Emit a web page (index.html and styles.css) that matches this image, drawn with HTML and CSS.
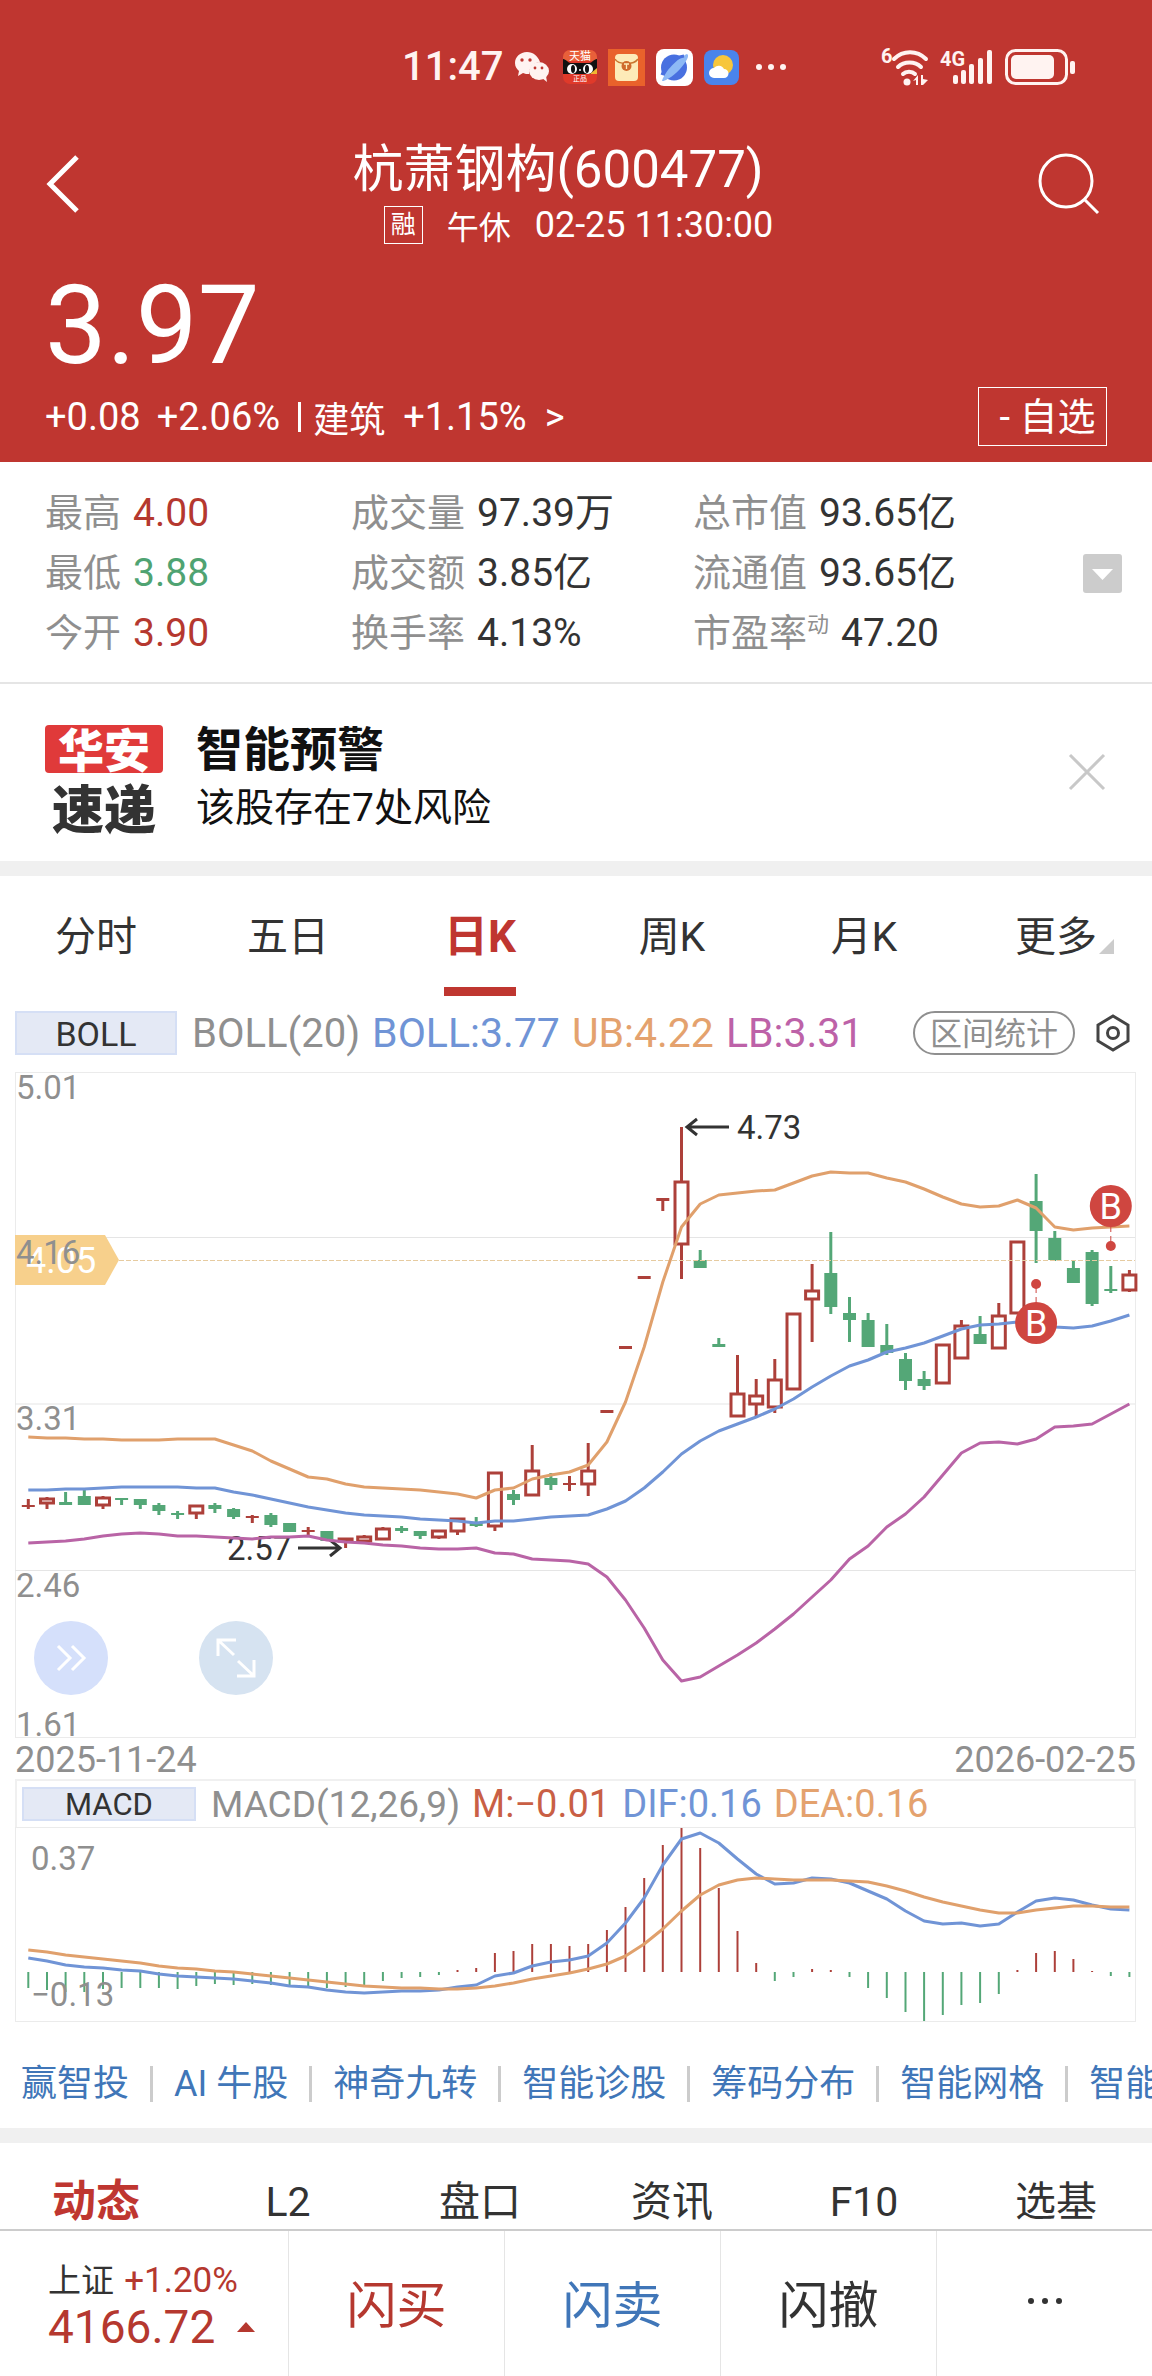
FILE: index.html
```
<!DOCTYPE html>
<html lang="zh-CN">
<head>
    <meta charset="UTF-8">
    <meta name="viewport" content="width=device-width, initial-scale=1.0">
    <title>杭萧钢构(600477)</title>
    <link rel="stylesheet" href="styles.css">
</head>
<body>
    <header class="header">
        <!-- 状态栏 -->
        <div class="status-bar">
            <div class="status-left">
                <span class="time">11:47</span>
                <svg class="wechat" viewBox="0 0 36 32" width="36" height="32">
                    <path fill="#fff3f1" d="M13 1C6 1 1 6 1 12c0 4 2 6 4 8l-1 5 5-3c2 1 4 1 6 1 0-7 4-11 11-12C24 5 19 1 13 1z"/>
                    <ellipse cx="25" cy="20" rx="10" ry="9" fill="#fff3f1"/>
                    <path fill="#fff3f1" d="M28 27l5 4-1-6z"/>
                    <g fill="#bf3630"><circle cx="8" cy="9" r="1.7"/><circle cx="16" cy="9" r="1.7"/><circle cx="21" cy="17" r="1.4"/><circle cx="28" cy="17" r="1.4"/></g>
                </svg>
                <svg viewBox="0 0 34 34" width="34" height="34">
                    <rect width="34" height="34" rx="7" fill="#e03a2a"/>
                    <path d="M0 7a7 7 0 0 1 7-7h20a7 7 0 0 1 7 7v4H0z" fill="#e8603a"/>
                    <path d="M0 9c3 0 5 4 8 4h18c3 0 5-4 8-4v15H0z" fill="#111"/>
                    <ellipse cx="9" cy="19" rx="5" ry="5" fill="#fff"/><ellipse cx="25" cy="19" rx="5" ry="5" fill="#fff"/>
                    <ellipse cx="10" cy="19" rx="2" ry="4" fill="#111"/><ellipse cx="24" cy="19" rx="2" ry="4" fill="#111"/>
                    <circle cx="17" cy="20" r="1" fill="#fff"/>
                    <path d="M27 24l7-6v6z" fill="#f2b632"/>
                    <text x="17" y="10" class="tmall-text">天猫</text>
                    <text x="17" y="31" class="tmall-sub">正品</text>
                </svg>
                <svg viewBox="0 0 37 37" width="37" height="37">
                    <rect width="37" height="37" fill="#e9622b"/>
                    <rect x="7" y="5" width="23" height="27" rx="4" fill="#fdebb8"/>
                    <path d="M7 10c3 6 19 6 23 0" fill="none" stroke="#c9762f" stroke-width="1.5"/>
                    <circle cx="18.500" cy="17" r="5" fill="#cf6a2c"/>
                    <path d="M16 15h5M18.500 15v5" stroke="#fdebb8" stroke-width="1.3"/>
                </svg>
                <svg viewBox="0 0 37 37" width="37" height="37">
                    <rect width="37" height="37" rx="8" fill="#fff"/>
                    <circle cx="18" cy="18.500" r="13" fill="#4870e0"/>
                    <path d="M6 32C9 22 22 9 31 5c2 1 1 4-1 7-5 8-12 15-20 19-2 1-3 1-4 1z" fill="#8db9f5"/>
                    <path d="M6 26C9 17 19 8 28 7" fill="none" stroke="#4870e0" stroke-width="3"/>
                </svg>
                <svg viewBox="0 0 35 35" width="35" height="35">
                    <rect width="35" height="35" rx="8" fill="#4a84ec"/>
                    <circle cx="19" cy="15" r="10" fill="#f7c63c"/>
                    <path d="M10 28a5 5 0 0 1 0-10 6 6 0 0 1 10 1 4.500 4.500 0 0 1 0 9z" fill="#fff"/>
                </svg>
                <svg class="more-dots" viewBox="0 0 30 6" width="30" height="6" fill="#fff3f1">
                    <circle cx="3" cy="3" r="3"/><circle cx="15" cy="3" r="3"/><circle cx="27" cy="3" r="3"/>
                </svg>
            </div>
            <div class="status-right">
                <svg viewBox="0 0 48 38" width="48" height="38">
                    <text x="0" y="15" class="signal-text">6</text>
                    <g fill="none" stroke="#fff3f1" stroke-width="4" stroke-linecap="round">
                        <path d="M13 11c9-9 23-9 32 0"/><path d="M17 19c6-6 17-6 23 0"/><path d="M22 26c3-3 9-3 12 0"/>
                    </g>
                    <circle cx="26" cy="34" r="3.500" fill="#fff3f1"/>
                    <path d="M32 33l5-6v10h-2v-5zM40 37V27h2v4l5 1-5 5z" fill="#fff3f1"/>
                </svg>
                <svg viewBox="0 0 54 36" width="54" height="36">
                    <text x="0" y="17" class="signal-text">4G</text>
                    <g fill="#fff3f1">
                        <rect x="13" y="26" width="5" height="9" rx="2"/><rect x="21" y="21" width="5" height="14" rx="2"/>
                        <rect x="29" y="15" width="5" height="20" rx="2"/><rect x="38" y="9" width="5" height="26" rx="2"/>
                        <rect x="47" y="1" width="5" height="34" rx="2"/>
                    </g>
                </svg>
                <svg class="battery" viewBox="0 0 72 36" width="72" height="36">
                    <rect x="1.500" y="1.500" width="60" height="33" rx="9" fill="none" stroke="#fff3f1" stroke-width="3"/>
                    <rect x="6" y="6" width="43" height="24" rx="5" fill="#fff3f1"/>
                    <rect x="65" y="12" width="5" height="13" rx="2" fill="#fff3f1"/>
                </svg>
            </div>
        </div>

        <!-- 标题 -->
        <div class="nav">
            <button class="back" aria-label="返回">
                <svg viewBox="0 0 34 58" width="34" height="58"><path d="M32 2L5 29l27 27" fill="none" stroke="#fff" stroke-width="5"/></svg>
            </button>
            <div class="title">
                <h1>杭萧钢构(600477)</h1>
                <div class="subtitle"><span class="tag">融</span><span class="session">午休</span><span>02-25 11:30:00</span></div>
            </div>
            <button class="search" aria-label="搜索">
                <svg viewBox="0 0 62 62" width="62" height="62" fill="none" stroke="#fff" stroke-width="3"><circle cx="28" cy="28" r="26"/><path d="M46 46l14 14"/></svg>
            </button>
        </div>

        <div class="price">3.97</div>
        <div class="change">
            <span>+0.08</span><span>+2.06%</span>
            <i class="bar"></i>
            <a href="#" class="sector"><b>建筑</b><span>+1.15%</span><span>&gt;</span></a>
            <button class="watch">- 自选</button>
        </div>
    </header>

    <!-- 行情数据 -->
    <section class="quote">
        <dl class="col">
            <div><dt>最高</dt><dd class="red">4.00</dd></div>
            <div><dt>最低</dt><dd class="green">3.88</dd></div>
            <div><dt>今开</dt><dd class="red">3.90</dd></div>
        </dl>
        <dl class="col">
            <div><dt>成交量</dt><dd>97.39万</dd></div>
            <div><dt>成交额</dt><dd>3.85亿</dd></div>
            <div><dt>换手率</dt><dd>4.13%</dd></div>
        </dl>
        <dl class="col">
            <div><dt>总市值</dt><dd>93.65亿</dd></div>
            <div><dt>流通值</dt><dd>93.65亿</dd></div>
            <div><dt>市盈率<sup>动</sup></dt><dd>47.20</dd></div>
        </dl>
        <button class="expand" aria-label="展开">
            <svg viewBox="0 0 39 39" width="39" height="39"><rect width="39" height="39" rx="3" fill="#ccc"/><path d="M9 15h21L19.500 26z" fill="#fff"/></svg>
        </button>
    </section>

    <!-- 预警 -->
    <section class="alert">
        <div class="logo"><span class="logo-top">华安</span><span class="logo-bottom">速递</span></div>
        <div class="alert-text">
            <h2>智能预警</h2>
            <p>该股存在7处风险</p>
        </div>
        <button class="close" aria-label="关闭">
            <svg viewBox="0 0 36 36" width="36" height="36"><path d="M1 1l34 34M35 1L1 35" stroke="#c8c8c8" stroke-width="3"/></svg>
        </button>
    </section>

    <nav class="tabs period-tabs">
        <button>分时</button>
        <button>五日</button>
        <button class="active">日K</button>
        <button>周K</button>
        <button>月K</button>
        <button class="more">更多<i class="corner"></i></button>
    </nav>

    <!-- K线图 -->
    <section class="chart-box">
        <div class="indicator">
            <button class="name">BOLL</button>
            <span class="params">BOLL(20)</span>
            <span class="c-blue">BOLL:3.77</span>
            <span class="c-orange">UB:4.22</span>
            <span class="c-purple">LB:3.31</span>
            <button class="range">区间统计</button>
            <button class="setting" aria-label="设置">
                <svg viewBox="0 0 34 38" width="34" height="38" fill="none" stroke="#444" stroke-width="3"><path d="M17 2l15 9v16l-15 9-15-9V11z"/><circle cx="17" cy="19" r="5.500"/></svg>
            </button>
        </div>
        <div class="kline">
            <svg id="kline" viewBox="0 0 1121 666"></svg>
            <div class="tools">
                <button class="fast" aria-label="快进">
                    <svg viewBox="0 0 30 26" width="30" height="26" fill="none" stroke="#fff" stroke-width="3"><path d="M2 1l12 12L2 25M16 1l12 12-12 12"/></svg>
                </button>
                <button class="full" aria-label="全屏">
                    <svg viewBox="0 0 40 40" width="40" height="40" fill="none" stroke="#fff" stroke-width="3"><path d="M2 18V2h18M2 2l16 15M38 22v16H21M38 38L22 23"/></svg>
                </button>
            </div>
        </div>
        <div class="dates"><span>2025-11-24</span><span>2026-02-25</span></div>
        <div class="indicator macd-head">
            <button class="name">MACD</button>
            <span class="params">MACD(12,26,9)</span>
            <span class="c-red">M:−0.01</span>
            <span class="c-blue">DIF:0.16</span>
            <span class="c-orange">DEA:0.16</span>
        </div>
        <svg id="macd" viewBox="0 0 1121 195"></svg>
    </section>

    <!-- 工具链接 -->
    <div class="links">
        <a href="#">赢智投</a>
        <a href="#">AI 牛股</a>
        <a href="#">神奇九转</a>
        <a href="#">智能诊股</a>
        <a href="#">筹码分布</a>
        <a href="#">智能网格</a>
        <a href="#">智能</a>
    </div>

    <nav class="tabs info-tabs">
        <button class="active">动态</button>
        <button>L2</button>
        <button>盘口</button>
        <button>资讯</button>
        <button>F10</button>
        <button>选基</button>
    </nav>

    <!-- 底部交易栏 -->
    <footer class="bottom">
        <a href="#" class="index">
            <span class="index-name">上证 <em>+1.20%</em></span>
            <span class="index-value">4166.72<svg viewBox="0 0 18 10" width="18" height="10"><path d="M0 10L9 0l9 10z" fill="#b5382f"/></svg></span>
        </a>
        <button class="buy">闪买</button>
        <button class="sell">闪卖</button>
        <button>闪撤</button>
        <button aria-label="更多">
            <svg viewBox="0 0 34 6" width="34" height="6" fill="#333"><circle cx="3" cy="3" r="3"/><circle cx="17" cy="3" r="3"/><circle cx="31" cy="3" r="3"/></svg>
        </button>
    </footer>
    <script src="chart.js"></script>
</body>
</html>
```

FILE: styles.css
```
* {
    box-sizing: border-box;
}
body {
    margin: 0;
    background-color: #fff;
    color: #333;
    font-family: Roboto, "Noto Sans CJK SC", sans-serif;
    overflow-x: hidden;
}
h1, h2, p, dl, dd {
    margin: 0;
    font-weight: 400;
}
button {
    padding: 0;
    border: none;
    background: none;
    color: inherit;
    font: inherit;
    cursor: pointer;
}
a {
    color: inherit;
    text-decoration: none;
}
svg {
    display: block;
    flex-shrink: 0;
    overflow: visible;
}

/* 顶部 */
.header {
    padding: 47px 45px 16px;
    background-color: #bf3630;
    color: #fff;
}
.status-bar {
    display: flex;
    justify-content: space-between;
    align-items: center;
    height: 40px;
    padding-left: 357px;
    padding-right: 30px;
    color: #fff3f1;
}
.status-left, .status-right {
    display: flex;
    align-items: center;
    gap: 11px;
}
.time {
    font-size: 40px;
    font-weight: 500;
    line-height: 40px;
}
.wechat {
    margin-right: 2px;
}
.more-dots {
    margin-left: 6px;
}
.tmall-text {
    font-size: 11px;
    fill: #fff;
    text-anchor: middle;
}
.tmall-sub {
    font-size: 7px;
    fill: #fff;
    text-anchor: middle;
}
.signal-text {
    font-size: 20px;
    font-weight: 700;
    fill: #fff3f1;
}
.nav {
    display: flex;
    align-items: flex-start;
    margin-top: 53px;
}
.back, .search {
    display: flex;
    align-items: center;
    height: 88px;
}
.back {
    width: 67px;
}
.search {
    justify-content: flex-end;
    width: 103px;
    padding-right: 7px;
}
.title {
    flex: 1;
    text-align: center;
}
h1 {
    font-size: 51px;
    line-height: 60px;
}
.subtitle {
    display: flex;
    justify-content: center;
    align-items: center;
    gap: 24px;
    height: 40px;
    margin-top: 5px;
    padding-left: 41px;
    font-size: 36px;
}
.session {
    font-size: 32px;
}
.tag {
    width: 39px;
    border: 1px solid #fff;
    font-size: 25px;
    line-height: 36px;
}
.price {
    margin-top: 26px;
    font-size: 110px;
    line-height: 110px;
}
.change {
    display: flex;
    align-items: center;
    gap: 16px;
    margin-top: 6px;
    font-size: 38px;
}
.bar {
    width: 3px;
    height: 30px;
    margin: 0 -4px 0 2px;
    background-color: #fff;
}
.sector {
    display: flex;
    align-items: center;
    gap: 18px;
}
.sector b {
    font-size: 36px;
    font-weight: 400;
}
.watch {
    margin-left: auto;
    width: 129px;
    height: 59px;
    padding-left: 10px;
    border: 1px solid #fff;
    font-size: 38px;
    line-height: 59px;
}

/* 行情数据 */
.quote {
    display: grid;
    grid-template-columns: 306px 342px 1fr 39px;
    align-items: center;
    padding: 21px 30px 19px 45px;
    border-bottom: 2px solid #e5e5e5;
    font-size: 38px;
    line-height: 60px;
}
.col div {
    display: flex;
    gap: 12px;
    height: 60px;
}
.col dt {
    color: #8f8f8f;
}
.col dd {
    font-size: 39px;
    white-space: nowrap;
}
.col sup {
    font-size: 22px;
    line-height: 0;
}
.red {
    color: #b5382f;
}
.green {
    color: #4fa372;
}

/* 预警 */
.alert {
    display: flex;
    align-items: center;
    gap: 33px;
    padding: 37px 47px 24px 45px;
    border-bottom: 15px solid #f0f0f0;
    color: #111;
}
.logo {
    display: flex;
    flex-direction: column;
    gap: 8px;
    width: 118px;
    font-family: "Noto Sans CJK SC", sans-serif;
    font-size: 52px;
    font-weight: 900;
    line-height: 52px;
    text-align: center;
}
.logo-top {
    height: 48px;
    border-radius: 4px;
    background-color: #e03a3a;
    color: #fff;
    font-size: 46px;
    line-height: 44px;
}
.logo-bottom {
    color: #333;
}
.alert-text {
    flex: 1;
    line-height: 58px;
}
.alert-text h2 {
    font-size: 47px;
    font-weight: 700;
}
.alert-text p {
    font-size: 39px;
}
.close {
    margin-bottom: 14px;
}

/* 标签栏 */
.tabs {
    display: grid;
    grid-template-columns: repeat(6, 1fr);
    font-size: 41px;
}
.tabs .active {
    color: #bf3630;
    font-size: 44px;
    font-weight: 700;
}
.period-tabs button {
    display: flex;
    flex-direction: column;
    align-items: center;
    height: 120px;
    padding-top: 31px;
    line-height: 60px;
}
.period-tabs .active::after {
    content: "";
    width: 72px;
    height: 9px;
    margin-top: 20px;
    background-color: #bf3630;
}
.more {
    position: relative;
}
.corner {
    position: absolute;
    left: 50%;
    top: 63px;
    margin-left: 43px;
    border-left: 15px solid transparent;
    border-bottom: 15px solid #ccc;
}

/* 图表 */
.chart-box {
    padding: 15px 16px 0 15px;
}
.indicator {
    display: flex;
    align-items: center;
    gap: 12px;
    height: 44px;
    color: #8f8f8f;
    font-size: 41px;
    white-space: nowrap;
}
.indicator .name {
    width: 162px;
    height: 44px;
    margin-right: 3px;
    border: 2px solid #d5dff5;
    background-color: #e4e9f5;
    color: #333;
    font-size: 34px;
    line-height: 42px;
}
.indicator .params {
    font-size: 40px;
}
.indicator .c-blue {
    color: #7094d6;
}
.indicator .c-orange {
    color: #e4a26e;
}
.indicator .c-purple {
    color: #bd62a8;
}
.indicator .c-red {
    color: #c95f45;
}
.indicator .range {
    width: 162px;
    height: 44px;
    margin-left: auto;
    border: 2px solid #8f8f8f;
    border-radius: 22px;
    font-size: 32px;
    line-height: 42px;
}
.setting {
    margin: 0 6px 0 9px;
}
.kline {
    position: relative;
    margin-top: 17px;
}
#kline, #macd {
    width: 100%;
}
.tools {
    position: absolute;
    left: 19px;
    bottom: 43px;
    display: flex;
    gap: 91px;
}
.tools button {
    display: flex;
    justify-content: center;
    align-items: center;
    width: 74px;
    height: 74px;
    border-radius: 50%;
}
.tools .fast {
    background-color: #d5e0fb;
}
.tools .full {
    background-color: #d6e3f1;
}
.dates {
    display: flex;
    justify-content: space-between;
    padding-top: 3px;
    color: #8f8f8f;
    font-size: 36px;
    line-height: 38px;
}
.macd-head {
    height: 48px;
    padding-left: 5px;
    border: 2px solid #f0f0f0;
    border-bottom: none;
    font-size: 38px;
}
.macd-head .name {
    width: 174px;
    height: 34px;
    font-size: 31px;
    line-height: 32px;
}
.macd-head .params {
    font-size: 37px;
}
.axis {
    fill: #8f8f8f;
    font-size: 33px;
}
.mark {
    fill: #333;
    font-size: 33px;
}
.cost {
    fill: #fff;
    font-size: 36px;
}
.badge {
    fill: #fff;
    font-size: 36px;
    text-anchor: middle;
}

/* 工具链接 */
.links {
    display: flex;
    padding: 38px 0 20px 21px;
    border-bottom: 15px solid #f0f0f0;
    overflow: hidden;
    color: #4076b8;
    font-size: 36px;
    line-height: 48px;
    white-space: nowrap;
}
.links a {
    display: flex;
    align-items: center;
    flex-shrink: 0;
}
.links a + a::before {
    content: "";
    width: 3px;
    height: 36px;
    margin: 0 21px;
    background-color: #ccc;
}

.info-tabs {
    padding-top: 33px;
    border-bottom: 2px solid #ccc;
    line-height: 53px;
}

/* 底部交易栏 */
.bottom {
    display: grid;
    grid-template-columns: 4fr 3fr 3fr 3fr 3fr;
    height: 145px;
}
.bottom button {
    display: flex;
    justify-content: center;
    align-items: center;
    padding-bottom: 5px;
    border-left: 1px solid #e5e5e5;
    font-size: 50px;
}
.index {
    display: flex;
    flex-direction: column;
    justify-content: center;
    padding: 2px 0 0 48px;
}
.index-name {
    font-size: 33px;
    line-height: 44px;
}
.index-name em {
    margin-left: 2px;
    color: #b5382f;
    font-size: 35px;
    font-style: normal;
}
.index-value {
    display: flex;
    align-items: center;
    gap: 22px;
    color: #b5382f;
    font-size: 46px;
    line-height: 48px;
}
.bottom .buy {
    color: #b5382f;
}
.bottom .sell {
    color: #4076b8;
}
```

FILE: chart.js
```
const RED = '#ad403a';
const GREEN = '#54a777';
const BLUE = '#7094d6';
const ORANGE = '#e0a06c';
const PURPLE = '#b964a6';
const STEP = 18.663;

// [涨跌, 最高, 实体上沿, 实体下沿, 最低]
const candles = [
    [1, 427, 433, 435, 437], [1, 425, 426, 432, 437], [0, 420, 430, 433, 433], [0, 418, 424, 433, 433],
    [1, 424, 425, 434, 437], [0, 426, 426, 428, 433], [0, 427, 427, 433, 437], [0, 431, 433, 439, 443],
    [0, 439, 441, 443, 447], [1, 433, 433, 442, 447], [0, 431, 433, 437, 441], [0, 436, 437, 445, 447],
    [1, 443, 444, 446, 451], [0, 441, 443, 453, 455], [0, 451, 451, 460, 460], [1, 455, 458, 460, 463],
    [0, 459, 459, 469, 469], [1, 466, 466, 470, 476], [1, 463, 464, 470, 471], [1, 455, 456, 468, 468],
    [0, 454, 456, 459, 461], [0, 459, 459, 464, 467], [1, 458, 458, 466, 467], [1, 446, 446, 460, 463],
    [0, 445, 451, 454, 455], [1, 400, 400, 455, 459], [0, 418, 422, 428, 433], [1, 373, 398, 424, 424],
    [0, 401, 406, 413, 418], [1, 404, 411, 413, 419], [1, 371, 398, 413, 424], [1, 338, 338, 341, 341],
    [1, 274, 274, 277, 277], [1, 204, 204, 207, 207], [1, 126, 126, 129, 139], [1, 55, 109, 173, 207],
    [0, 178, 188, 196, 196], [0, 266, 272, 275, 275], [1, 283, 321, 345, 345], [1, 307, 323, 333, 344],
    [1, 287, 307, 336, 341], [1, 241, 241, 318, 318], [1, 192, 218, 228, 270], [0, 160, 201, 235, 242],
    [0, 225, 241, 248, 270], [0, 241, 248, 275, 275], [0, 252, 273, 281, 283], [0, 281, 287, 309, 318],
    [0, 299, 307, 314, 318], [1, 272, 272, 312, 312], [1, 248, 253, 287, 287], [0, 244, 262, 272, 272],
    [1, 231, 243, 277, 277], [1, 169, 169, 242, 242], [0, 102, 129, 159, 191], [0, 159, 166, 188, 189],
    [0, 189, 196, 211, 211], [0, 178, 180, 232, 234], [0, 194, 217, 219, 221], [1, 198, 202, 219, 220]
];
const ub = [365, 366, 366, 367, 367, 368, 368, 368, 367, 367, 367, 373, 379, 389, 397, 405, 407, 412, 415, 416,
    417, 418, 420, 422, 426, 418, 416, 407, 403, 400, 393, 370, 330, 275, 210, 155, 132, 123, 121, 119,
    118, 111, 104, 100, 101, 101, 106, 110, 117, 125, 132, 135, 134, 128, 136, 155, 158, 156, 155, 154];
const mid = [418, 418, 417, 417, 416, 415, 415, 415, 415, 416, 416, 420, 423, 427, 431, 435, 438, 441, 443, 444,
    445, 447, 448, 449, 451, 449, 449, 447, 445, 444, 443, 437, 429, 416, 400, 382, 369, 359, 352, 345,
    337, 327, 315, 304, 294, 288, 280, 276, 271, 264, 257, 253, 252, 250, 253, 255, 256, 254, 249, 243];
const lb = [471, 470, 469, 467, 464, 462, 461, 462, 464, 464, 465, 466, 467, 465, 465, 464, 468, 470, 471, 473,
    474, 476, 477, 477, 476, 481, 482, 487, 488, 489, 492, 505, 528, 556, 588, 609, 605, 594, 583, 571,
    557, 542, 525, 508, 487, 474, 455, 442, 425, 403, 381, 371, 370, 372, 367, 355, 354, 352, 342, 332];

// MACD
const ZERO = 145;
const hist = [161, 163, 165, 165, 162, 161, 161, 161, 162, 159, 157, 158, 157, 158, 160, 159, 161, 160, 158, 154,
    151, 150, 148, 143, 141, 126, 124, 117, 117, 119, 117, 103, 80, 51, 18, 1, 21, 61, 104, 136,
    154, 150, 142, 143, 150, 161, 171, 185, 194, 188, 178, 176, 167, 143, 126, 124, 132, 144, 149, 150];
const dif = [131, 134, 138, 140, 141, 143, 144, 147, 149, 150, 151, 152, 154, 156, 159, 160, 163, 165, 166, 165,
    164, 164, 163, 160, 158, 149, 146, 139, 135, 133, 129, 116, 96, 71, 38, 12, 6, 16, 32, 47,
    57, 56, 51, 52, 56, 64, 72, 84, 94, 97, 96, 99, 97, 85, 74, 71, 73, 78, 82, 83];
const dea = [123, 125, 128, 130, 132, 134, 136, 139, 141, 142, 144, 145, 147, 149, 151, 153, 155, 157, 159, 160,
    161, 161, 162, 162, 161, 159, 156, 152, 149, 146, 142, 137, 129, 117, 102, 84, 68, 58, 53, 51,
    52, 53, 53, 53, 54, 55, 59, 64, 70, 75, 79, 83, 86, 86, 83, 81, 79, 79, 80, 80];

function xAt(i) {
    return 13.3 + i * STEP;
}

function line(data, color) {
    const points = data.map((y, i) => `${xAt(i).toFixed(1)},${y}`).join(' ');
    return `<polyline points="${points}" fill="none" stroke="${color}" stroke-width="3" stroke-linejoin="round"/>`;
}

function vline(x, y1, y2, color, width) {
    return `<path d="M${x.toFixed(1)} ${y1}V${y2}" stroke="${color}" stroke-width="${width}"/>`;
}

function candle(c, i) {
    const [up, high, top, bottom, low] = c;
    const x = xAt(i);
    const color = up ? RED : GREEN;
    let out = vline(x, high, top, color, 3) + vline(x, bottom, low, color, 3);
    if (up && bottom - top > 3) {
        out += `<rect x="${(x - 6.5).toFixed(1)}" y="${top + 1}" width="13" height="${bottom - top - 2}" fill="#fff" stroke="${color}" stroke-width="3"/>`;
    } else {
        out += `<rect x="${(x - 6.5).toFixed(1)}" y="${top}" width="13" height="${bottom - top}" fill="${color}"/>`;
    }
    return out;
}

function buyPoint(i, y, dotY) {
    const x = xAt(i).toFixed(1);
    return `<path d="M${x} ${y}V${dotY}" stroke="#cf4640" stroke-dasharray="6 4"/>
        <circle cx="${x}" cy="${dotY}" r="5" fill="#cf4640"/>
        <circle cx="${x}" cy="${y}" r="21" fill="#cf4640"/>
        <text x="${x}" y="${y + 13}" class="badge">B</text>`;
}

function drawKline() {
    let html = '<rect x="0.5" y="0.5" width="1120" height="665" fill="none" stroke="#ebebeb"/>';
    html += '<path d="M0 165.500H1120M0 332H1120M0 498.500H1120" stroke="#e5e5e5"/>';
    html += '<path d="M0 163h90l14 25-14 25H0z" fill="#f7d08c"/>';
    html += '<text x="11" y="201" class="cost">4.05</text>';
    [['5.01', 27], ['4.16', 192], ['3.31', 358], ['2.46', 525], ['1.61', 664]].forEach(([text, y]) => {
        html += `<text x="1" y="${y}" class="axis">${text}</text>`;
    });
    html += '<text x="212" y="488" class="mark">2.57</text>';
    html += '<path d="M283 476h41M315 468l10 8-10 8" fill="none" stroke="#333" stroke-width="3"/>';
    html += '<text x="722" y="67" class="mark">4.73</text>';
    html += '<path d="M714 55h-41M682 47l-10 8 10 8" fill="none" stroke="#333" stroke-width="3"/>';
    html += candles.map(candle).join('');
    html += '<path d="M104 188.500H1120" stroke="#e6cba0" stroke-dasharray="5 2"/>';
    html += line(ub, ORANGE) + line(mid, BLUE) + line(lb, PURPLE);
    html += buyPoint(54, 251, 212) + buyPoint(58, 134, 174);
    document.getElementById('kline').innerHTML = html;
}

function drawMacd() {
    let html = '<rect x="0.5" y="0.5" width="1120" height="194" fill="none" stroke="#ebebeb"/>';
    html += hist.map((y, i) => vline(xAt(i), ZERO, y, y < ZERO ? RED : GREEN, 2)).join('');
    html += '<text x="16" y="43" class="axis">0.37</text>';
    html += '<text x="16" y="179" class="axis">−0.13</text>';
    html += line(dif, BLUE) + line(dea, ORANGE);
    document.getElementById('macd').innerHTML = html;
}

drawKline();
drawMacd();
```
